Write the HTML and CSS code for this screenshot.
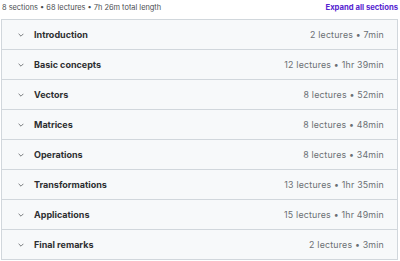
FILE: index.html
```html
<!DOCTYPE html>
<html>
<head>
<meta charset="utf-8">
<link rel="stylesheet" href="styles.css">
</head>
<body>
<div class="curriculum">
  <div class="summary">
    <span class="stats">8 sections • 68 lectures • 7h 26m total length</span>
    <button class="expand">Expand all sections</button>
  </div>
  <div class="sections">
    <div class="section"><span class="left"><svg class="chev" viewBox="0 0 10 6"><path d="M1 1l4 4 4-4"/></svg><span class="title">Introduction</span></span><span class="meta">2 lectures • 7min</span></div>
    <div class="section"><span class="left"><svg class="chev" viewBox="0 0 10 6"><path d="M1 1l4 4 4-4"/></svg><span class="title">Basic concepts</span></span><span class="meta">12 lectures • 1hr 39min</span></div>
    <div class="section"><span class="left"><svg class="chev" viewBox="0 0 10 6"><path d="M1 1l4 4 4-4"/></svg><span class="title">Vectors</span></span><span class="meta">8 lectures • 52min</span></div>
    <div class="section"><span class="left"><svg class="chev" viewBox="0 0 10 6"><path d="M1 1l4 4 4-4"/></svg><span class="title">Matrices</span></span><span class="meta">8 lectures • 48min</span></div>
    <div class="section"><span class="left"><svg class="chev" viewBox="0 0 10 6"><path d="M1 1l4 4 4-4"/></svg><span class="title">Operations</span></span><span class="meta">8 lectures • 34min</span></div>
    <div class="section"><span class="left"><svg class="chev" viewBox="0 0 10 6"><path d="M1 1l4 4 4-4"/></svg><span class="title">Transformations</span></span><span class="meta">13 lectures • 1hr 35min</span></div>
    <div class="section"><span class="left"><svg class="chev" viewBox="0 0 10 6"><path d="M1 1l4 4 4-4"/></svg><span class="title">Applications</span></span><span class="meta">15 lectures • 1hr 49min</span></div>
    <div class="section"><span class="left"><svg class="chev" viewBox="0 0 10 6"><path d="M1 1l4 4 4-4"/></svg><span class="title">Final remarks</span></span><span class="meta">2 lectures • 3min</span></div>
  </div>
</div>
</body>
</html>
```
FILE: styles.css
```css
html, body {
  margin: 0;
  padding: 0;
  background: #ffffff;
}
body {
  font-family: Inter, "Noto Sans", sans-serif;
  color: #2d2f31;
}
.curriculum {
  padding: 0 2px 0 1px;
  width: 397px;
}
.summary {
  height: 19px;
  display: flex;
  align-items: center;
  justify-content: space-between;
  padding-left: 1px;
}
.stats {
  font-size: 7.4px;
  color: #4a4d50;
  position: relative;
  top: -2px;
}
.expand {
  background: none;
  border: none;
  padding: 0;
  font-family: inherit;
  font-size: 7.7px;
  font-weight: 700;
  color: #5624d0;
  position: relative;
  top: -2px;
}
.sections {
  border: 1px solid #d1d7dc;
}
.section {
  height: 29px;
  background: #f7f9fa;
  display: flex;
  align-items: center;
  justify-content: space-between;
  padding: 0 13px 0 16px;
  border-bottom: 1px solid #d1d7dc;
}
.section:last-child {
  border-bottom: none;
}
.left {
  display: flex;
  align-items: center;
}
.chev {
  width: 6px;
  height: 4px;
  fill: none;
  stroke: #55585b;
  stroke-width: 1.3;
  margin-right: 10px;
}
.title {
  font-size: 9px;
  font-weight: 700;
  position: relative;
  top: -0.5px;
}
.meta {
  font-size: 8.8px;
  letter-spacing: 0.2px;
  color: #6a6f73;
}
```
